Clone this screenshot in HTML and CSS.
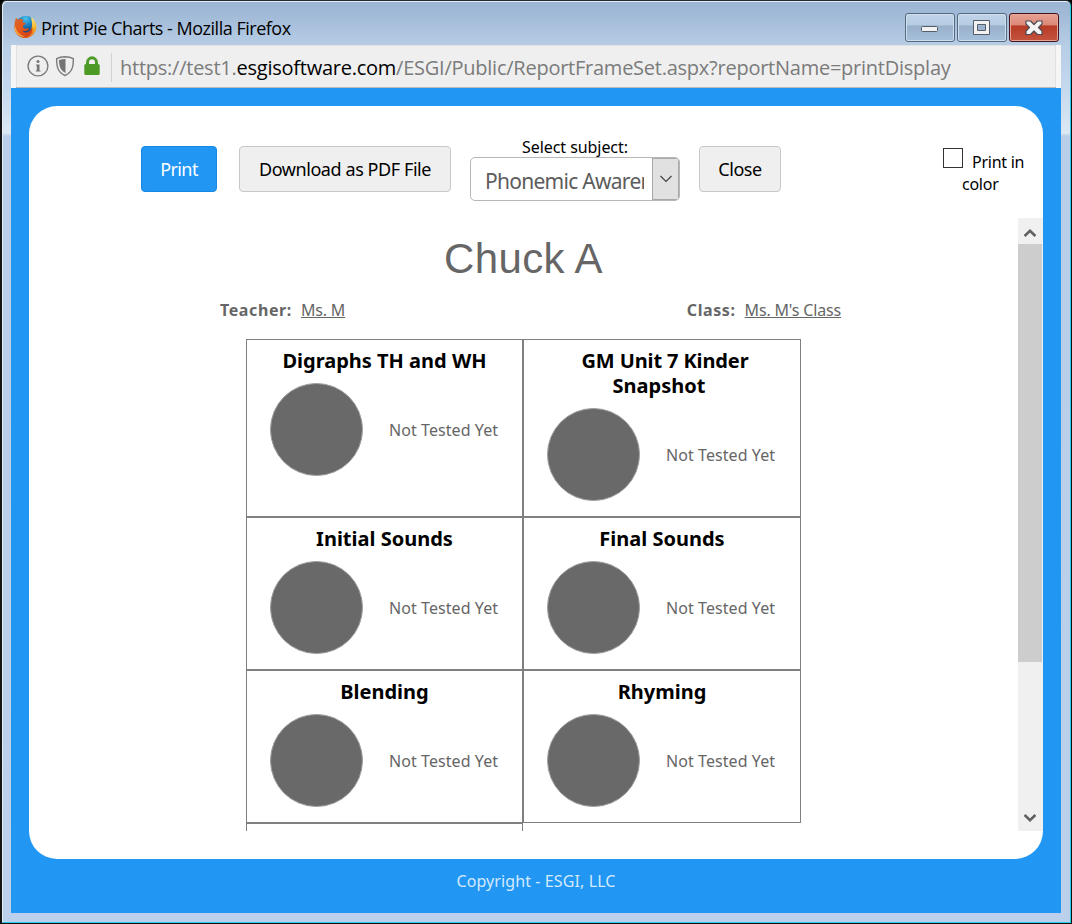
FILE: index.html
```html
<!DOCTYPE html>
<html lang="en">
<head>
<meta charset="utf-8">
<title>Print Pie Charts</title>
<link rel="stylesheet" href="styles.css">
</head>
<body>
<div class="window">
  <header class="titlebar">
    <svg class="logo" width="23" height="24" viewBox="0 0 23 24">
      <defs>
        <radialGradient id="globe" cx=".5" cy=".15" r=".8"><stop offset="0" stop-color="#49c4ee"/><stop offset=".5" stop-color="#1774b8"/><stop offset="1" stop-color="#123468"/></radialGradient>
        <linearGradient id="fox" x1="0" y1="0" x2="1" y2="1"><stop offset="0" stop-color="#d9662a"/><stop offset=".45" stop-color="#e4581c"/><stop offset="1" stop-color="#c93a1c"/></linearGradient>
        <linearGradient id="tail" x1="0" y1="0" x2="0" y2="1"><stop offset="0" stop-color="#ffe887"/><stop offset=".5" stop-color="#f6b52a"/><stop offset="1" stop-color="#e8641c"/></linearGradient>
      </defs>
      <circle cx="11.800" cy="10.500" r="9.800" fill="url(#globe)"/>
      <path d="M17 2C22 5 24 12 21 17C18 23 10 25 5 21C12 22 18 17 18 10C18 7 17.500 5 17 2Z" fill="url(#tail)"/>
      <path d="M2 2.500L4 5C5 4 6.500 3.700 8 4.500L9.500 4.500C8.500 6 8.300 7 9 7.500L11.500 8C11.500 9.500 9.500 10 9 11C8.500 13 10.500 14 12.500 13.500C14 13 15.500 13.500 14.500 14.500C13 16.500 10 16.500 8 15.500C11 19 16.500 17.500 18 12C19.500 16 17 20.500 13 22C7 24 1 20 .5 13C.2 9 1 6 2 2.500Z" fill="url(#fox)"/>
      <path d="M1.500 11C2 16 5 20 11 21.500C6 23 1 18.500 .6 14Z" fill="#f5a43a"/>
    </svg>
    <span class="title">Print Pie Charts - Mozilla Firefox</span>
    <div class="controls">
      <span class="control"><svg width="48" height="27" viewBox="0 0 48 27"><rect x="15.500" y="12.500" width="16" height="5" rx="1" fill="#f2f2f2" stroke="#535d6b"/></svg></span>
      <span class="control"><svg width="48" height="27" viewBox="0 0 48 27"><path fill-rule="evenodd" d="M15.500 6.500H31.500V20.500H15.500ZM19.500 10.500V16.500H27.500V10.500Z" fill="#f2f2f2" stroke="#535d6b"/></svg></span>
      <span class="control control-close"><svg width="48" height="27" viewBox="0 0 48 27"><path d="M16 7H20.500L24 10.500L27.500 7H32V10L28.500 13.500L32 17V20.500H27.500L24 17L20.500 20.500H16V17L19.500 13.500L16 10Z" fill="#f5f5f5" stroke="#4c4b55" stroke-width="1.200" stroke-linejoin="round"/></svg></span>
    </div>
  </header>
  <div class="client">
    <div class="urlbar">
      <svg class="site-icons" width="78" height="24" viewBox="0 0 78 24">
        <circle cx="12" cy="12" r="9.900" fill="none" stroke="#7c7c7c" stroke-width="1.400"/>
        <circle cx="12" cy="7.500" r="1.500" fill="#757575"/><path d="M10 10.500H13.500V16.500H14.500V17.500H9.800V16.500H10.800V11.500H10Z" fill="#757575"/>
        <path d="M39 2.700Q34 2.900 30.700 4.700C30.500 13 32 18.500 39 21.500C46 18.500 47.500 13 47.300 4.700Q44 2.900 39 2.700Z" fill="none" stroke="#7c7c7c" stroke-width="1.400"/>
        <path d="M39.500 5Q35.500 5.100 33 6.100C33 12.500 34.500 16.800 39.500 19Z" fill="#757575"/>
        <path d="M61.500 12V8.500A4.500 4.700 0 0 1 70.500 8.500V12" fill="none" stroke="#4d9a26" stroke-width="3"/><rect x="58.300" y="10" width="15.400" height="11" rx="1.500" fill="#4d9a26"/>
      </svg>
      <span class="url">https://test1.<b>esgisoftware.com</b>/ESGI/Public/ReportFrameSet.aspx?reportName=printDisplay</span>
    </div>
    <main class="page">
      <section class="panel">
        <div class="toolbar">
          <button class="button button-primary">Print</button>
          <button class="button button-download">Download as PDF File</button>
          <div class="subject">
            <label class="subject-label">Select subject:</label>
            <div class="select">
              <span class="select-value">Phonemic Awareness</span>
              <span class="select-arrow"><svg width="14" height="10" viewBox="0 0 14 10"><path d="M1.500 2L7 7.500L12.500 2" fill="none" stroke="#444" stroke-width="1.200"/></svg></span>
            </div>
          </div>
          <button class="button button-exit">Close</button>
          <label class="color-option"><i class="checkbox"></i><span>Print in<br></span><span class="color-word">color</span></label>
        </div>
        <div class="viewport">
          <div class="report">
            <h1 class="student">Chuck A</h1>
            <div class="details">
              <div class="detail"><b class="key">Teacher:</b><u>Ms. M</u></div>
              <div class="detail"><b class="key">Class:</b><u>Ms. M's Class</u></div>
            </div>
            <div class="charts">
              <article class="chart"><h2>Digraphs TH and WH</h2><div class="result"><i class="pie"></i><span>Not Tested Yet</span></div></article>
              <article class="chart"><h2><span class="line-first">GM Unit 7 Kinder</span><span class="line-last">Snapshot</span></h2><div class="result"><i class="pie"></i><span>Not Tested Yet</span></div></article>
              <article class="chart"><h2>Initial Sounds</h2><div class="result"><i class="pie"></i><span>Not Tested Yet</span></div></article>
              <article class="chart"><h2>Final Sounds</h2><div class="result"><i class="pie"></i><span>Not Tested Yet</span></div></article>
              <article class="chart"><h2>Blending</h2><div class="result"><i class="pie"></i><span>Not Tested Yet</span></div></article>
              <article class="chart"><h2>Rhyming</h2><div class="result"><i class="pie"></i><span>Not Tested Yet</span></div></article>
              <article class="chart"></article>
            </div>
          </div>
          <div class="scrollbar">
            <span class="scroll-button scroll-up"><svg width="12" height="10" viewBox="0 0 12 10"><path d="M.6 8L6 2.800L11.400 8" fill="none" stroke="#606060" stroke-width="2.600"/></svg></span>
            <span class="thumb"></span>
            <span class="scroll-button scroll-down"><svg width="12" height="10" viewBox="0 0 12 10"><path d="M.6 2L6 7.200L11.400 2" fill="none" stroke="#606060" stroke-width="2.600"/></svg></span>
          </div>
        </div>
      </section>
      <footer class="footer">Copyright - ESGI, LLC</footer>
    </main>
  </div>
</div>
</body>
</html>
```
FILE: styles.css
```css
* { box-sizing: border-box; }
body { margin: 0; background: #000; font-family: "Noto Sans", sans-serif; overflow: hidden; }
svg { display: block; }
.window {
  width: 1072px; height: 924px; padding: 1px 9px 9px 9px;
  border: solid; border-width: 1px 1px 1px 2px; border-color: #252a32 #111 #111 #151515;
  border-radius: 6px 6px 0 0;
  background: linear-gradient(#9cb5d2, #a0b9d6 12px, #b7cde6 44px, #c5d9ee 90px, #dce8f4 132px, #b9cfe9 135px, #bbd0eb);
  box-shadow: inset -1px -1px #29c9e9, inset 1px 1px #e4edf6;
}
.titlebar { height: 43px; display: flex; align-items: flex-start; padding: 13px 2px 0 3px; }
.logo { margin-right: 4px; }
.title { font-family: "Open Sans", sans-serif; font-size: 18px; line-height: 26px; letter-spacing: -.49px; white-space: nowrap; }
.controls { display: flex; gap: 2px; margin: -2px 1px 0 auto; }
.control {
  width: 50px; height: 29px; border: 1px solid #55697f; border-radius: 3px;
  background: linear-gradient(#c0d3e8, #b7cce2 42%, #98b0ca 43%, #a7c0db);
  box-shadow: inset 0 0 0 1px #cfdeed;
}
.control-close { border-color: #461018; background: linear-gradient(#e4a193, #dc8877 42%, #b63b25 43%, #c4533e); box-shadow: inset 0 0 0 1px #e5a799; }
.client { width: 1050px; height: 868px; }
.urlbar { height: 43px; display: flex; align-items: center; background: #efefef; border: solid #f6f6f6; border-width: 0 5px; box-shadow: inset 0 -1px #bababa, inset 1px 1px #e0e0e0, inset -1px 0 #e0e0e0; padding-left: 10px; }
.site-icons { flex: none; margin: 0 7px 1px 0; }
.url { height: 29px; margin-top: 1px; border-left: 1px solid #d2d2d2; padding-left: 8px; color: #7b7b7b; font: 20px/29px "Open Sans", sans-serif; letter-spacing: -.245px; white-space: nowrap; }
.url b { color: #000; font-weight: 400; }
.page { height: 825px; background: #2196f3; padding: 18px 18px 0; }
.panel { width: 1014px; height: 753px; border-radius: 28px; background: #fff; }
.toolbar { height: 112px; display: flex; align-items: flex-start; padding: 30px 0 0 112px; white-space: nowrap; }
.button { height: 46px; margin-top: 10px; padding: 0; border: 1px solid #c8c8c8; border-radius: 4px; background: #efefef; color: #000; font: 18px/44px "Noto Sans", sans-serif; letter-spacing: -.42px; }
.button-primary { width: 76px; background: #2196f3; border-color: #1588e5; color: #fff; letter-spacing: -.6px; }
.button-download { width: 212px; margin-left: 22px; }
.subject { width: 210px; margin: 0 19px; }
.subject-label { display: block; height: 21px; text-align: center; font-size: 16px; line-height: 22px; letter-spacing: -.07px; }
.select { height: 44px; display: flex; border: 1px solid #b7b7b7; border-radius: 5px; overflow: hidden; }
.select-value { width: 159px; margin-left: 14px; overflow: hidden; color: #5c5c5c; font-size: 21px; line-height: 46px; letter-spacing: -.72px; }
.select-arrow { margin-left: auto; width: 27px; border: 1px solid #a8a8a8; background: #e1e1e1; display: grid; place-items: center; }
.button-exit { width: 82px; }
.color-option { width: 85px; margin: 12px 0 0 159px; font-size: 16px; line-height: 22px; letter-spacing: -.25px; }
.checkbox { display: inline-block; width: 20px; height: 20px; margin: 0 9px 0 3px; border: 1px solid #333; vertical-align: 0; }
.color-word { margin-left: 22px; }
.viewport { height: 613px; display: flex; overflow: hidden; }
.report { width: 989px; height: 613px; overflow: hidden; color: #666; }
.student { margin: 0; padding-top: 16px; height: 82px; text-align: center; font: 42px/50px "Liberation Sans", sans-serif; letter-spacing: .35px; }
.details { width: 621px; height: 39px; margin-left: 191px; display: flex; justify-content: space-between; font-size: 16px; line-height: 22px; white-space: nowrap; }
.detail { display: flex; gap: 9px; margin-top: -1px; letter-spacing: -.17px; }
.key { letter-spacing: .6px; }
.charts { width: 555px; margin-left: 217px; display: grid; grid-template-columns: 277px 278px; grid-template-rows: 178px 153px 153px 153px; }
.chart { border: 1px solid #808080; padding-top: 8px; white-space: nowrap; }
.chart h2 { margin: 0; text-align: center; font-size: 20px; line-height: 25px; color: #000; }
.line-first, .line-last { display: block; }
.line-first { padding-left: 6px; letter-spacing: -.12px; }
.line-last { padding-right: 6px; }
.result { display: flex; align-items: center; margin: 10px 0 0 22.5px; font-size: 16px; letter-spacing: .07px; }
.pie { width: 93px; height: 93px; margin-right: 26.5px; border: 1px solid #a0a0a0; border-radius: 50%; background: #696969; }
.scrollbar { width: 25px; background: #f0f0f0; display: flex; flex-direction: column; }
.scroll-button { height: 26px; padding-right: 1px; display: grid; place-items: center; }
.scroll-up { padding-top: 3px; }
.thumb { width: 24px; height: 418px; background: #cdcdcd; }
.scroll-down { margin-top: auto; }
.footer { height: 54px; padding-top: 11px; color: #d3eafd; text-align: center; font-size: 16px; line-height: 22px; letter-spacing: .1px; }
```
